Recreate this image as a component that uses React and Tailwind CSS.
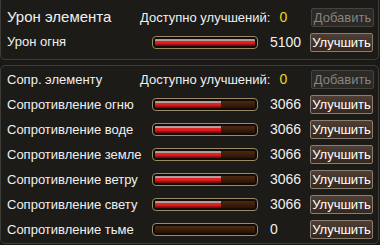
import React from "react";

const font = { fontFamily: '"Liberation Sans", Arial, sans-serif' };

function Bar({ pct }) {
  return (
    <div className="w-[106px] h-[13px] rounded-[4px] border border-[#9a8a68] bg-[#120c06] p-[2px] flex">
      <div className="flex-1 h-full rounded-[1px] overflow-hidden flex bg-[linear-gradient(to_bottom,#4a2a12_0%,#3c1e0a_50%,#2a1205_100%)]">
        <div
          className="h-full bg-[linear-gradient(to_bottom,#a89898_0%,#b8a0a0_25%,#e02424_35%,#e01c1c_60%,#a01010_80%,#6a0808_100%)]"
          style={{ width: `${pct}%` }}
        />
      </div>
    </div>
  );
}

function UpBtn() {
  return (
    <div className="w-[63px] h-[19px] flex items-center justify-center rounded-[2px] border border-[#8a7e70] bg-[linear-gradient(to_bottom,#4e3e34,#36281f)] text-[13px] text-white leading-none">
      Улучшить
    </div>
  );
}

function AddBtn() {
  return (
    <div className="w-[63px] h-[19px] flex items-center justify-center rounded-[2px] border border-[#44433e] bg-[#2b2a27] text-[13px] text-[#858480] leading-none">
      Добавить
    </div>
  );
}

function Header({ title, big }) {
  return (
    <div className="h-[25px] flex items-center">
      <div className={`w-[139px] pl-[6px] text-[#f0f0f0] whitespace-nowrap ${big ? "text-[15px]" : "text-[13px]"}`}>{title}</div>
      <div className="text-[13px] text-[#f0f0f0] whitespace-nowrap">Доступно улучшений:</div>
      <div className="ml-[9px] text-[14px] text-[#ecd81c]">0</div>
      <div className="ml-auto mr-[4px]">
        <AddBtn />
      </div>
    </div>
  );
}

function Row({ label, pct, value, h = "h-[25px]" }) {
  return (
    <div className={`${h} flex items-center`}>
      <div className="w-[151px] pl-[6px] text-[13px] text-[#f0f0f0] whitespace-nowrap">{label}</div>
      <Bar pct={pct} />
      <div className="w-[52px] pl-[12px] text-[14px] text-[#f0f0f0]">{value}</div>
      <UpBtn />
    </div>
  );
}

export default function App() {
  const rows = [
    ["Сопротивление огню", 66, "3066"],
    ["Сопротивление воде", 66, "3066"],
    ["Сопротивление земле", 66, "3066"],
    ["Сопротивление ветру", 66, "3066"],
    ["Сопротивление свету", 66, "3066"],
    ["Сопротивление тьме", 0, "0"],
  ];
  return (
    <div className="w-[380px] h-[245px] bg-[#1a1915] overflow-hidden" style={font}>
      <div className="w-[379px] border-x border-b border-[#3e3c36] rounded-b-[5px] bg-[#1c1b17] pt-[5px] pb-[5px]">
        <Header title="Урон элемента" big />
        <Row label="Урон огня" pct={100} value="5100" h="h-[24px]" />
      </div>
      <div className="mt-[5px] w-[379px] border border-[#3e3c36] rounded-[5px] bg-[#1c1b17] pt-[1px] pb-[1px]">
        <Header title="Сопр. элементу" />
        {rows.map(([l, p, v]) => (
          <Row key={l} label={l} pct={p} value={v} />
        ))}
      </div>
    </div>
  );
}
